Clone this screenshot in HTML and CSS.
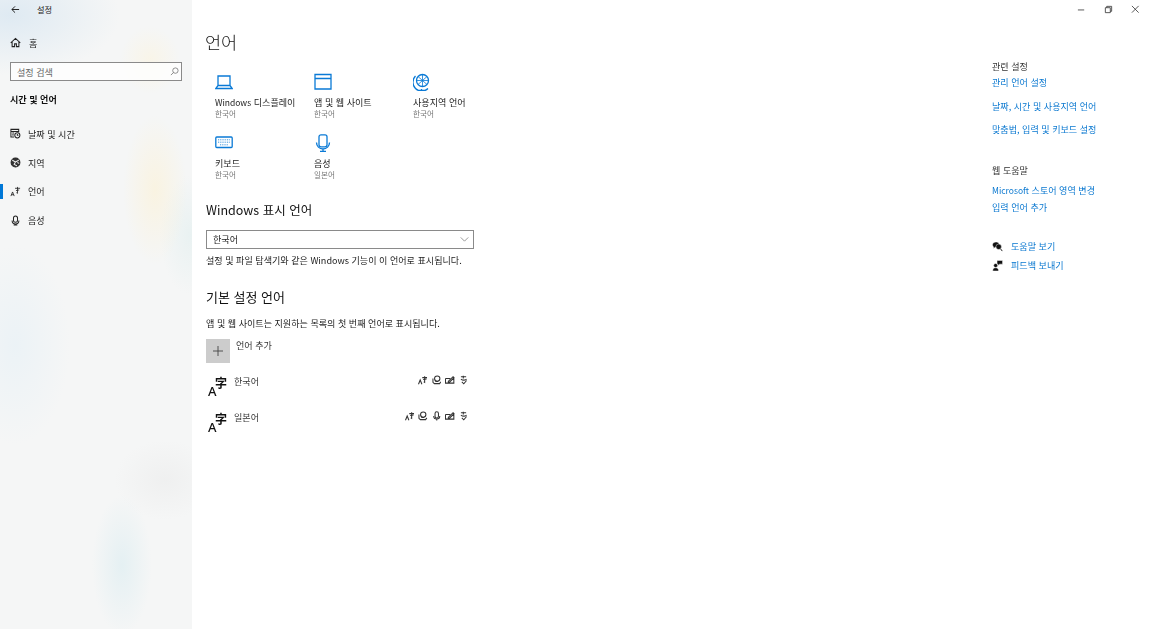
FILE: index.html
```html
<!DOCTYPE html>
<html lang="ko">
<head>
<meta charset="utf-8">
<title>설정</title>
<link rel="stylesheet" href="styles.css">
</head>
<body>
<div class="app">
  <aside class="sidebar">
    <div class="titlebar">
      <svg class="back" viewBox="0 0 10 10"><path d="M9 5H1M4.500 1.500 1 5l3.500 3.500"/></svg>
      <span class="apptitle">설정</span>
    </div>
    <div class="navrow home">
      <svg class="navicon" viewBox="0 0 12 12"><path d="M.8 6.300 6 1.500l5.200 4.800M2.300 5v5.500h2.700V7.500h2v3h2.700V5"/></svg>
      <span>홈</span>
    </div>
    <div class="search">
      <span>설정 검색</span>
      <svg class="searchicon" viewBox="0 0 10 10"><circle cx="6" cy="4" r="3"/><path d="M4 6 1 9"/></svg>
    </div>
    <div class="navhead">시간 및 언어</div>
    <nav class="nav">
      <div class="navrow">
        <svg class="navicon" viewBox="0 0 12 12"><path d="M4.500 9.800H1V1.500h8.500V4.500M1 3.800h8.500M2.500 5.500h2M2.500 7.500h1.500"/><circle cx="8" cy="8" r="2.800"/><path d="M8 6.500V8h1.200"/></svg>
        <span>날짜 및 시간</span>
      </div>
      <div class="navrow">
        <svg class="navicon" viewBox="0 0 12 12"><circle cx="6" cy="6" r="4.800" class="fillg"/><path d="M2.500 3.500 6 5.500l3.500-2M6 5.500 4.500 8l3 1.500M8 6l2 1" class="wh"/></svg>
        <span>지역</span>
      </div>
      <div class="navrow active">
        <i class="marker"></i>
        <svg class="navicon" viewBox="0 0 12 12"><path class="thin" d="M1 11 2.800 6.500 4.600 11M1.600 9.500h2.400M5.500 2.500H11M8.200 1v7L7 7.300M6.500 5 10 4.300"/></svg>
        <span>언어</span>
      </div>
      <div class="navrow">
        <svg class="navicon" viewBox="0 0 12 12"><rect x="3.800" y="1" width="4.400" height="7" rx="2.200"/><path d="M2.300 6a3.700 3.700 0 0 0 7.400 0M6 9.700V11M4 11h4"/></svg>
        <span>음성</span>
      </div>
    </nav>
  </aside>

  <main class="content">
    <h1 class="title">언어</h1>
    <div class="tiles">
      <div class="tile">
        <svg class="tileicon" viewBox="0 0 18 18"><path d="M3 3h12v9.500H3zM.8 15.500h16.400L15 12.500H3z"/></svg>
        <div class="tilename"><span class="latin">Windows</span> 디스플레이</div>
        <div class="tilesub">한국어</div>
      </div>
      <div class="tile">
        <svg class="tileicon" viewBox="0 0 18 18"><path d="M1 1.500h16v14.500H1zM1 5.500h16"/></svg>
        <div class="tilename">앱 및 웹 사이트</div>
        <div class="tilesub">한국어</div>
      </div>
      <div class="tile">
        <svg class="tileicon" viewBox="0 0 18 18"><circle cx="9.500" cy="7.500" r="6"/><path class="hatch" d="M5 3.500l9 8M14 3.500l-9 8M4 7.500h11M9.500 1.500v12"/><path d="M2.500 3a8.800 8.800 0 0 0 12.500 12.500M8.500 16v1.500M5.500 17.500h6"/></svg>
        <div class="tilename">사용지역 언어</div>
        <div class="tilesub">한국어</div>
      </div>
      <div class="tile">
        <svg class="tileicon" viewBox="0 0 18 18"><rect x=".8" y="3" width="16.400" height="10.500" rx="1"/><path class="hatch" d="M3 5.800h12M3 8.200h12M5 10.800h8" stroke-dasharray="1 .8"/></svg>
        <div class="tilename">키보드</div>
        <div class="tilesub">한국어</div>
      </div>
      <div class="tile">
        <svg class="tileicon" viewBox="0 0 18 18"><rect x="5" y=".8" width="8" height="12" rx="2"/><path d="M2.500 8.500a6.500 6.500 0 0 0 13 0M9 15v2.300M6 17.300h6"/></svg>
        <div class="tilename">음성</div>
        <div class="tilesub">일본어</div>
      </div>
    </div>

    <h2 class="heading first">Windows 표시 언어</h2>
    <div class="select">
      <span>한국어</span>
      <svg class="chev" viewBox="0 0 10 6"><path d="M.5 .5 5 5 9.500 .5"/></svg>
    </div>
    <p class="desc">설정 및 파일 탐색기와 같은 Windows 기능이 이 언어로 표시됩니다.</p>

    <h2 class="heading second">기본 설정 언어</h2>
    <p class="desc pref">앱 및 웹 사이트는 지원하는 목록의 첫 번째 언어로 표시됩니다.</p>

    <div class="addrow">
      <div class="addbtn"><svg viewBox="0 0 10 10"><path d="M5 0v10M0 5h10"/></svg></div>
      <span>언어 추가</span>
    </div>

    <div class="langrow">
      <div class="langicon"><span class="la">A</span><span class="lz">字</span></div>
      <span class="langname">한국어</span>
      <div class="caps">
        <svg class="cap" viewBox="0 0 10 10"><path d="M.5 9.500 2.300 5l1.800 4.500M4.500 2.500h5M7 1v6.500L6 7M5.500 4.500 9 4"/></svg>
        <svg class="cap" viewBox="0 0 10 10"><circle cx="5.500" cy="3.500" r="2.800"/><path d="M1 3.500v4l1.500 1.300h5.500L9.300 7M3.500 6.500h3"/></svg>
        <svg class="cap" viewBox="0 0 10 10"><path d="M.5 3.500h5M.5 3.500v4.800h8.800V3M3.500 6.500 8.500 1.500l1 1-5 5h-1z"/></svg>
        <svg class="cap" viewBox="0 0 10 10"><path d="M2 1.500h5.500M4.500 .5v3M2 4c2 1.500 4 1.500 6 0M3 7l2 2 3-3.500"/></svg>
      </div>
    </div>
    <div class="langrow">
      <div class="langicon"><span class="la">A</span><span class="lz">字</span></div>
      <span class="langname">일본어</span>
      <div class="caps">
        <svg class="cap" viewBox="0 0 10 10"><path d="M.5 9.500 2.300 5l1.800 4.500M4.500 2.500h5M7 1v6.500L6 7M5.500 4.500 9 4"/></svg>
        <svg class="cap" viewBox="0 0 10 10"><circle cx="5.500" cy="3.500" r="2.800"/><path d="M1 3.500v4l1.500 1.300h5.500L9.300 7M3.500 6.500h3"/></svg>
        <svg class="cap" viewBox="0 0 10 10"><rect x="3.200" y=".5" width="3.600" height="6.500" rx="1.800"/><path d="M1.800 5a3.200 3.200 0 0 0 6.400 0M5 8.500v1.300"/></svg>
        <svg class="cap" viewBox="0 0 10 10"><path d="M.5 3.500h5M.5 3.500v4.800h8.800V3M3.500 6.500 8.500 1.500l1 1-5 5h-1z"/></svg>
        <svg class="cap" viewBox="0 0 10 10"><path d="M2 1.500h5.500M4.500 .5v3M2 4c2 1.500 4 1.500 6 0M3 7l2 2 3-3.500"/></svg>
      </div>
    </div>
  </main>

  <aside class="right">
    <div class="winbar">
      <svg class="win" viewBox="0 0 10 10"><path d="M1 5.500h7"/></svg>
      <svg class="win" viewBox="0 0 10 10"><path d="M1.500 3h5.500v5.500H1.500zM3 3V1.500h5.500V7H7"/></svg>
      <svg class="win" viewBox="0 0 10 10"><path d="M1 1l7.500 7.500M8.500 1 1 8.500"/></svg>
    </div>
    <div class="sidehead h1">관련 설정</div>
    <a class="link l1">관리 언어 설정</a>
    <a class="link l2a">날짜, 시간 및 사용지역 언어</a>
    <a class="link l2">맞춤법, 입력 및 키보드 설정</a>
    <div class="sidehead h2">웹 도움말</div>
    <a class="link l3"><span class="latin">Microsoft</span> 스토어 영역 변경</a>
    <a class="link l4">입력 언어 추가</a>
    <div class="helprow r1">
      <svg class="helpicon" viewBox="0 0 12 12"><path class="solid" d="M4.500 1C2.500 1 .5 2.200 .5 4.200c0 1 .5 1.800 1.200 2.300V8.300l1.900-1.500h.9C6.500 6.800 8 5.500 8 4S6.500 1 4.500 1z"/><circle cx="7.300" cy="6.300" r="3" class="solid"/><path d="M9.300 8.500 11.200 11"/></svg>
      <a class="link">도움말 보기</a>
    </div>
    <div class="helprow r2">
      <svg class="helpicon" viewBox="0 0 12 12"><circle class="solid" cx="4" cy="6" r="2.200"/><path class="solid" d="M.8 12c0-2.400 1.200-3.500 3.200-3.500s3.200 1.100 3.200 3.500zM5.500 .5h6v4H8.300L6.500 6V4.500h-1z"/></svg>
      <a class="link">피드백 보내기</a>
    </div>
  </aside>
</div>
</body>
</html>
```
FILE: styles.css
```css
* { box-sizing: border-box; }
html, body { margin: 0; height: 100%; }
body {
  background: #fff;
  color: #1a1a1a;
  font-family: "Noto Sans CJK KR", "Noto Sans", sans-serif;
  font-size: 9.07px;
  line-height: 14px;
  overflow: hidden;
}
svg { display: block; fill: none; stroke: currentColor; }
.app { display: flex; height: 629px; filter: blur(.3px); }
.latin { font-size: 8.500px; }

/* Sidebar */
.sidebar {
  width: 192px;
  flex: none;
  color: #222;
  background:
    radial-gradient(ellipse 32px 75px at 155px 190px, rgba(253, 240, 205, .5), transparent),
    radial-gradient(ellipse 30px 34px at 150px 60px, rgba(253, 243, 215, .45), transparent),
    radial-gradient(ellipse 30px 60px at 190px 235px, rgba(215, 235, 235, .4), transparent),
    radial-gradient(ellipse 110px 60px at 10px 15px, rgba(208, 226, 240, .6), transparent),
    radial-gradient(ellipse 55px 100px at 15px 345px, rgba(224, 238, 246, .45), transparent),
    radial-gradient(ellipse 30px 70px at 122px 565px, rgba(215, 235, 240, .55), transparent),
    radial-gradient(ellipse 50px 40px at 165px 480px, rgba(230, 230, 230, .4), transparent),
    #f5f6f6;
}
.titlebar { display: flex; align-items: center; height: 18px; padding-left: 11px; }
.back { width: 9px; height: 9px; stroke-width: 1.100; }
.apptitle { margin-left: 17px; font-size: 8.200px; }
.navrow {
  position: relative;
  display: flex;
  align-items: center;
  gap: 7px;
  height: 29px;
  padding-left: 10px;
}
.home { margin-top: 10px; gap: 8px; }
.navicon { width: 11px; height: 11px; stroke-width: 1.100; flex: none; }
.fillg { fill: #333; }
.wh { stroke: #f3f3f3; }
.thin { stroke-width: .9; }
.search {
  display: flex;
  align-items: center;
  justify-content: space-between;
  width: 172px;
  height: 19px;
  margin: 5px 0 0 10px;
  padding: 0 2px 0 6px;
  border: 1.500px solid #8a8a8a;
  background: rgba(255, 255, 255, .75);
  color: #666;
}
.searchicon { width: 9px; height: 9px; stroke: #777; stroke-width: .9; }
.navhead { margin: 11px 0 0 10px; font-weight: 700; color: #111; }
.nav { margin-top: 13.600px; }
.nav .navrow { height: 28.700px; }
.marker { position: absolute; left: 0; top: 7px; width: 3px; height: 15px; background: #0078d7; }

/* Main */
.content { flex: none; width: 300px; padding-left: 14px; }
.title { margin: 28px 0 0 -1px; font-size: 17.500px; font-weight: 300; line-height: 27px; color: #111; }
.tiles {
  display: grid;
  grid-template-columns: repeat(3, 99px);
  grid-auto-rows: 61px;
  margin: 18px 0 0 9px;
}
.tileicon { width: 18px; height: 18px; color: #0a7ad6; stroke-width: 1.300; }
.hatch { stroke-width: .8; }
.tilename { margin-top: 5px; line-height: 13px; color: #222; }
.tilesub { margin-top: -1px; font-size: 7.600px; line-height: 11px; color: #777; }
.heading { margin: 0; font-size: 12.500px; font-weight: 400; line-height: 18px; color: #111; }
.first { margin-top: 6px; }
.select {
  display: flex;
  align-items: center;
  justify-content: space-between;
  width: 268px;
  height: 19px;
  margin-top: 11px;
  padding: 0 4px 1px 6px;
  border: 1.500px solid #8a8a8a;
  color: #222;
}
.chev { width: 9px; height: 5px; stroke: #777; stroke-width: .9; }
.desc { margin: 4px 0 0; line-height: 14px; color: #222; }
.second { margin-top: 21px; font-size: 13px; }
.pref { margin-top: 10px; }
.addrow { display: flex; margin-top: 9px; gap: 6px; color: #333; }
.addrow span { margin-top: -1px; }
.addbtn {
  display: flex;
  align-items: center;
  justify-content: center;
  width: 24px;
  height: 24px;
  background: #cccccc;
}
.addbtn svg { width: 10px; height: 10px; color: #444; stroke-width: .9; }
.langrow { display: flex; width: 262px; height: 36px; padding-left: 2px; }
.addrow + .langrow { margin-top: 11px; }
.langicon { display: flex; width: 18px; height: 20px; margin-top: 3px; color: #111; }
.la { align-self: flex-end; font-family: "Noto Sans", sans-serif; font-size: 13px; font-weight: 500; line-height: 12px; }
.lz { margin-left: -1.500px; font-family: "Noto Sans CJK SC", sans-serif; font-size: 12px; font-weight: 700; line-height: 12px; }
.langname { margin-left: 8px; line-height: 14px; color: #333; }
.caps { display: flex; gap: 4px; margin-left: auto; padding-top: 1px; color: #333; height: 12px; }
.cap { width: 9.500px; height: 10px; stroke-width: 1.100; }

/* Right rail */
.right { flex: 1; padding-left: 500px; position: relative; }
.winbar {
  position: absolute;
  top: 5px;
  right: 10px;
  display: flex;
  gap: 18px;
  color: #333;
}
.win { width: 9px; height: 9px; stroke-width: .9; }
.sidehead { color: #333; line-height: 14px; }
.h1 { margin-top: 59px; }
.h2 { margin-top: 27px; }
.link { display: block; color: #0a78d0; line-height: 14px; }
.l1 { margin-top: 2px; }
.l2a { margin-top: 10px; }
.l2 { margin-top: 9px; }
.l3 { margin-top: 6px; }
.l4 { margin-top: 3px; }
.helprow { display: flex; align-items: center; gap: 8px; height: 14px; }
.r1 { margin-top: 25px; }
.r2 { margin-top: 5px; }
.helpicon { width: 11px; height: 11px; color: #111; stroke-width: 1; }
.solid { fill: #111; stroke: #fff; stroke-width: .5; }
```
